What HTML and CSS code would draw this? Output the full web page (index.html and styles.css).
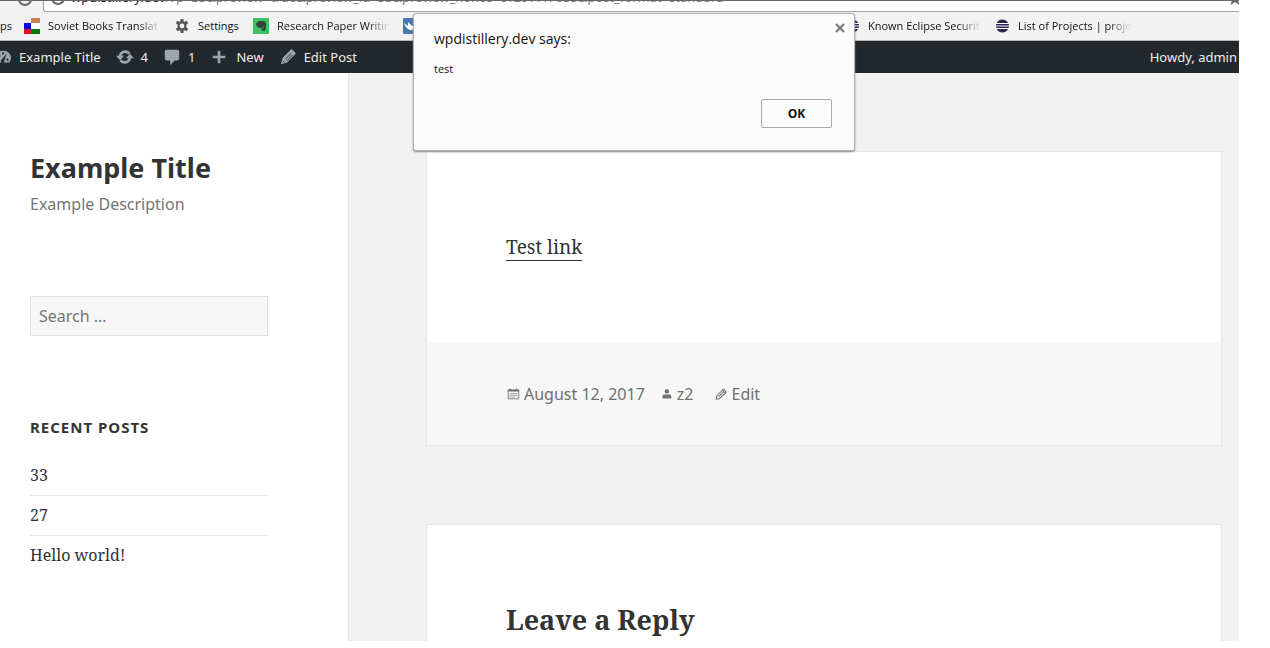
FILE: index.html
```html
<!DOCTYPE html>
<html lang="en">
<head>
<meta charset="utf-8">
<title>Example Title</title>
<link rel="stylesheet" href="styles.css">
</head>
<body>
<svg width="0" height="0" class="defs" aria-hidden="true">
  <symbol id="eclipse" viewBox="0 0 16 16">
    <path d="M7 2a6.5 6.500 0 0 0 0 12" fill="none" stroke="#f2a654" stroke-width="2"/>
    <circle cx="8.500" cy="8" r="6.500" fill="#2c2255"/>
    <path d="M2 5.500h13M2 8h13M2 10.500h13" stroke="#fff" stroke-width="1"/>
  </symbol>
</svg>
<div class="browser">
  <div class="address-row">
    <svg class="reload" viewBox="0 0 16 16"><circle cx="8" cy="8" r="6" fill="none" stroke="#666" stroke-width="2"/></svg>
    <div class="address">
      <svg class="info" viewBox="0 0 16 16"><circle cx="8" cy="8" r="6" fill="none" stroke="#666" stroke-width="2"/><path d="M8 7v4" stroke="#666" stroke-width="2"/></svg>
      <span class="url"><b>wpdistillery.dev</b>/?p=33&amp;preview=true&amp;preview_id=33&amp;preview_nonce=c12977f7655&amp;post_format=standard</span>
      <svg class="star" viewBox="0 0 16 16"><path d="M8 1l2 5 5 .5-4 3.500L12.500 15 8 12l-4.500 3L5 10 1 6.500 6 6z" fill="#666"/></svg>
    </div>
  </div>

  <nav class="bookmarks" aria-label="Bookmarks">
    <a href="#" class="apps">ps</a>
    <a href="#" class="bookmark">
      <svg viewBox="0 0 16 16"><path d="M0 0h7v5H0z" fill="#eee"/><path d="M7 0h9v5H7z" fill="#cf8050"/><path d="M0 5h7v6H0z" fill="#0000e0"/><path d="M7 5h9v6H7z" fill="#fff"/><path d="M0 11h7v5H0z" fill="#dc1020"/><path d="M7 11h9v5H7z" fill="#087808"/></svg>
      <span class="label fade">Soviet Books Translat</span>
    </a>
    <a href="#" class="bookmark">
      <svg viewBox="0 0 16 16"><path d="M6.500 1h3v2.200l1.300.6 1.800-1 1.600 2.500-1.800 1.300v2.800l1.800 1.300-1.600 2.500-1.800-1-1.300.6V15h-3v-2.200l-1.300-.6-1.800 1-1.600-2.500 1.800-1.300V6.600L1.800 5.300l1.600-2.500 1.800 1 1.300-.6zM8 5.600a2.400 2.400 0 1 0 0 4.800 2.400 2.400 0 0 0 0-4.800z" fill="#555" fill-rule="evenodd"/></svg>
      <span class="label-short">Settings</span>
    </a>
    <a href="#" class="bookmark">
      <svg viewBox="0 0 16 16"><path d="M0 0h16v16H0z" fill="#3dc162"/><path d="M3 5.500L6 3h4c2 0 3 1 3 4s-.5 6-2 6-2.500-.5-2.500-2 1-1.800 2-1.400V8.500c-1.200 0-1.500.7-2 1.500-2 .5-5-.5-5.500-4.500z" fill="#39423a"/></svg>
      <span class="label fade">Research Paper Writin</span>
    </a>
    <a href="#" class="bookmark" aria-label="Bookmark">
      <svg viewBox="0 0 16 16"><rect width="16" height="16" rx="1" fill="#4b77b0"/><path d="M1 5l4 3V4l4 4 6-4c0 5-3 8-7 8-3 0-5-2-7-7z" fill="#fff"/></svg>
    </a>
    <a href="#" class="bookmark after-dialog">
      <svg><use href="#eclipse"/></svg>
      <span class="label fade">Known Eclipse Securit</span>
    </a>
    <a href="#" class="bookmark">
      <svg><use href="#eclipse"/></svg>
      <span class="label fade">List of Projects | proje</span>
    </a>
  </nav>

  <nav class="adminbar" aria-label="Toolbar">
    <a href="#" class="site">
      <svg viewBox="0 0 20 20"><path d="M10 3a8 8 0 0 0-7 13h14a8 8 0 0 0-7-13z" fill="#a0a5aa"/><circle cx="6" cy="9" r="1.200" fill="#23282d"/><circle cx="5" cy="13" r="1.200" fill="#23282d"/><circle cx="10" cy="6" r="1.200" fill="#23282d"/><circle cx="15" cy="13" r="1.200" fill="#23282d"/><path d="M14 6l-2.500 8a2 2 0 1 1-3-1z" fill="#23282d"/></svg>
      Example Title</a>
    <a href="#" class="updates">
      <svg viewBox="0 0 20 20"><path d="M4.500 9a5.800 5.800 0 0 1 10.500-2.500M15.500 11a5.800 5.800 0 0 1-10.500 2.500" fill="none" stroke="#a0a5aa" stroke-width="3"/><path d="M0 8.500h9l-4.500 5zM11 11.500h9l-4.500-5z" fill="#a0a5aa"/></svg>
      4</a>
    <a href="#" class="comments">
      <svg viewBox="0 0 20 20"><path d="M4 2h12q2 0 2 2v8q0 2-2 2h-3l-5 5v-5H4q-2 0-2-2V4q0-2 2-2z" fill="#a0a5aa"/></svg>
      1</a>
    <a href="#" class="new">
      <svg viewBox="0 0 20 20"><path d="M10 3v14M3 10h14" stroke="#a0a5aa" stroke-width="3"/></svg>
      New</a>
    <a href="#" class="edit-post">
      <svg viewBox="0 0 20 20"><path d="M13 2q1-1 2 0l3 3q1 1 0 2L9 16l-7 2 2-7z" fill="#a0a5aa"/><path d="M13.500 6L7 12.500M15 8l-6.500 6.500M4 14l2 2" stroke="#23282d" stroke-width="1"/></svg>
      Edit Post</a>
    <a href="#" class="account">Howdy, admin</a>
  </nav>

  <div class="page">
    <aside class="sidebar">
      <h1 class="site-title">Example Title</h1>
      <p class="site-description">Example Description</p>
      <input class="search" type="search" placeholder="Search …" aria-label="Search">
      <h2 class="widget-title">RECENT POSTS</h2>
      <ul class="posts">
        <li><a href="#">33</a></li>
        <li><a href="#">27</a></li>
        <li><a href="#">Hello world!</a></li>
      </ul>
    </aside>
    <main class="content">
      <article class="card">
        <div class="entry"><a href="#">Test link</a></div>
        <footer class="meta">
          <a href="#" class="date"><svg viewBox="0 0 16 16"><path d="M2.500 3.500h12v10h-12z" fill="none" stroke="#707070"/><path d="M2 3h13v2H2zM4 2h2v2H4zM11 2h2v2h-2z" fill="#707070"/><path d="M4 7.500h9M4 9.500h9M4 11.500h6" stroke="#999"/></svg>August 12, 2017</a>
          <a href="#" class="author"><svg viewBox="0 0 16 16"><circle cx="9" cy="5" r="2.500" fill="#707070"/><path d="M4 13v-2.500Q4 8.500 6 8.500h6q2 0 2 2V13z" fill="#707070"/></svg>z2</a>
          <a href="#" class="edit"><svg viewBox="0 0 16 16"><path d="M11 2.500l2.500 2.500v1.500L6 13.500l-3.500.5.500-3.500 7.500-8zM10 4l2.500 2.500M5.500 11L11.500 5" fill="none" stroke="#707070" stroke-width="1.200"/></svg>Edit</a>
        </footer>
      </article>
      <section class="card reply">
        <h2>Leave a Reply</h2>
      </section>
    </main>
  </div>

  <div class="dialog" role="dialog" aria-labelledby="dialog-title">
    <div class="dialog-head">
      <h2 id="dialog-title">wpdistillery.dev says:</h2>
      <button class="close" aria-label="Close"><svg viewBox="0 0 10 10"><path d="M1 1l8 8M9 1L1 9" stroke="#777" stroke-width="2"/></svg></button>
    </div>
    <p>test</p>
    <button class="ok">OK</button>
  </div>
</div>
</body>
</html>
```
FILE: styles.css
```css
* { box-sizing: border-box; }
body {
  margin: 0;
  background: #fff;
  font-family: "Noto Sans", "Open Sans", sans-serif;
  color: #333;
}
a { color: inherit; text-decoration: none; }
h1, h2, p, ul { margin: 0; padding: 0; }
svg { flex: none; }
.defs { position: absolute; }

.browser {
  position: relative;
  display: flex;
  flex-direction: column;
  height: calc(100vh - 7px);
  margin-right: 31px;
  overflow: hidden;
}

.address-row {
  display: flex;
  align-items: flex-end;
  flex: none;
  height: 12px;
  padding-left: 17px;
  gap: 10px;
  border-top: 1px solid #68666a;
  background: #f2f2f2;
  overflow: hidden;
}
.reload { width: 16px; height: 16px; margin-bottom: 5px; }
.address {
  display: flex;
  align-items: flex-end;
  flex: 1;
  height: 32px;
  padding: 0 0 5px 6px;
  gap: 5px;
  border: 1px solid #a6a6a6;
  border-right: 0;
  border-radius: 3px 0 0 3px;
  background: #fff;
}
.address svg { width: 16px; height: 16px; }
.address .star { margin-right: -4px; }
.url {
  flex: 1;
  font: 13px/18px "Noto Sans", "Open Sans", sans-serif;
  color: #808080;
  white-space: nowrap;
}
.url b { font-weight: 400; color: #222; }

.bookmarks {
  display: flex;
  align-items: center;
  flex: none;
  height: 29px;
  gap: 13px;
  border-bottom: 1px solid #b5b5b5;
  background: #f2f2f2;
  font: 11px/16px "Open Sans", sans-serif;
  color: #111;
}
.apps { width: 11px; }
.bookmark { display: flex; align-items: center; gap: 8px; }
.bookmark svg { width: 16px; height: 16px; }
.label { width: 113px; white-space: nowrap; }
.label-short { width: 42px; white-space: nowrap; }
.fade { mask-image: linear-gradient(to right, #000 80%, transparent); }
.after-dialog { margin-left: 412px; }

.adminbar {
  display: flex;
  align-items: center;
  flex: none;
  height: 32px;
  padding-right: 2px;
  background: #23282d;
  color: #eee;
  font-size: 13px;
}
.adminbar a { display: flex; align-items: center; gap: 7px; margin-right: 15px; }
.adminbar svg { width: 18px; height: 18px; }
.adminbar .site { margin-left: -6px; }
.adminbar .new { gap: 8px; }
.adminbar .account { margin: 0 0 0 auto; }

.page { display: flex; flex: 1; min-height: 0; background: #f1f1f1; }
.sidebar {
  flex: 0 0 349px;
  padding: 76px 80px 0 30px;
  border-right: 1px solid #e6e6e6;
  background: #fff;
}
.site-title { font-size: 27px; line-height: 38px; }
.site-description { font-size: 16px; line-height: 24px; margin-top: 5px; color: #757575; }
.search {
  display: block;
  width: 100%;
  height: 40px;
  margin-top: 80px;
  padding: 0 8px;
  border: 1px solid #e0e0e0;
  background: #f7f7f7;
  font: 16px "Noto Sans", "Open Sans", sans-serif;
  appearance: none;
}
.search::placeholder { color: #757575; }
.widget-title { margin: 80px 0 25px; font-size: 15px; line-height: 22px; letter-spacing: 1px; }
.posts { list-style: none; font: 16px/24px "Noto Serif", "DejaVu Serif Condensed", "DejaVu Serif", serif; }
.posts li { padding: 7px 0 8px; border-bottom: 1px solid #e6e6e6; }
.posts li:first-child { padding-top: 0; }
.posts li:last-child { border: 0; }

.content { flex: 1; min-width: 0; padding: 78px 17px 0 77px; }
.card { border: 1px solid #e6e6e6; background: #fff; }
.entry {
  padding: 80px 79px;
  font: 19px/30px "Noto Serif", "DejaVu Serif Condensed", "DejaVu Serif", serif;
}
.entry a { border-bottom: 1px solid #333; }
.meta {
  display: flex;
  padding: 40px 79px 39px;
  background: #f7f7f7;
  color: #707070;
  font-size: 16px;
  line-height: 24px;
}
.meta a { display: flex; align-items: center; gap: 4px; }
.meta svg { width: 14px; height: 14px; }
.meta .author { margin-left: 14px; }
.meta .edit { margin-left: 20px; }
.reply { height: 300px; margin-top: 78px; padding: 75px 79px; }
.reply h2 { font: bold 27px/40px "Noto Serif", "DejaVu Serif Condensed", "DejaVu Serif", serif; }

.dialog {
  position: absolute;
  left: 413px;
  top: 13px;
  width: 442px;
  height: 138px;
  padding: 6px 9px 22px 20px;
  border: 1px solid #b0b0b0;
  border-radius: 3px;
  background: #fbfbfb;
  box-shadow: 0 1px 2px #888;
  font-family: "Open Sans", sans-serif;
  color: #111;
}
.dialog-head { display: flex; justify-content: space-between; align-items: flex-start; }
.dialog h2 { margin-top: 9px; font-size: 14px; line-height: 20px; font-weight: 400; }
.dialog p { margin-top: 12px; font-size: 11px; line-height: 16px; }
.close { width: 10px; height: 16px; padding: 0; border: 0; background: none; }
.close svg { display: block; width: 10px; height: 10px; }
.ok {
  display: block;
  width: 71px;
  height: 29px;
  margin: 22px 13px 0 auto;
  border: 1px solid #aaa;
  border-radius: 2px;
  background: #fbfbfb;
  font: bold 12px "Open Sans", sans-serif;
  color: #111;
}
```
